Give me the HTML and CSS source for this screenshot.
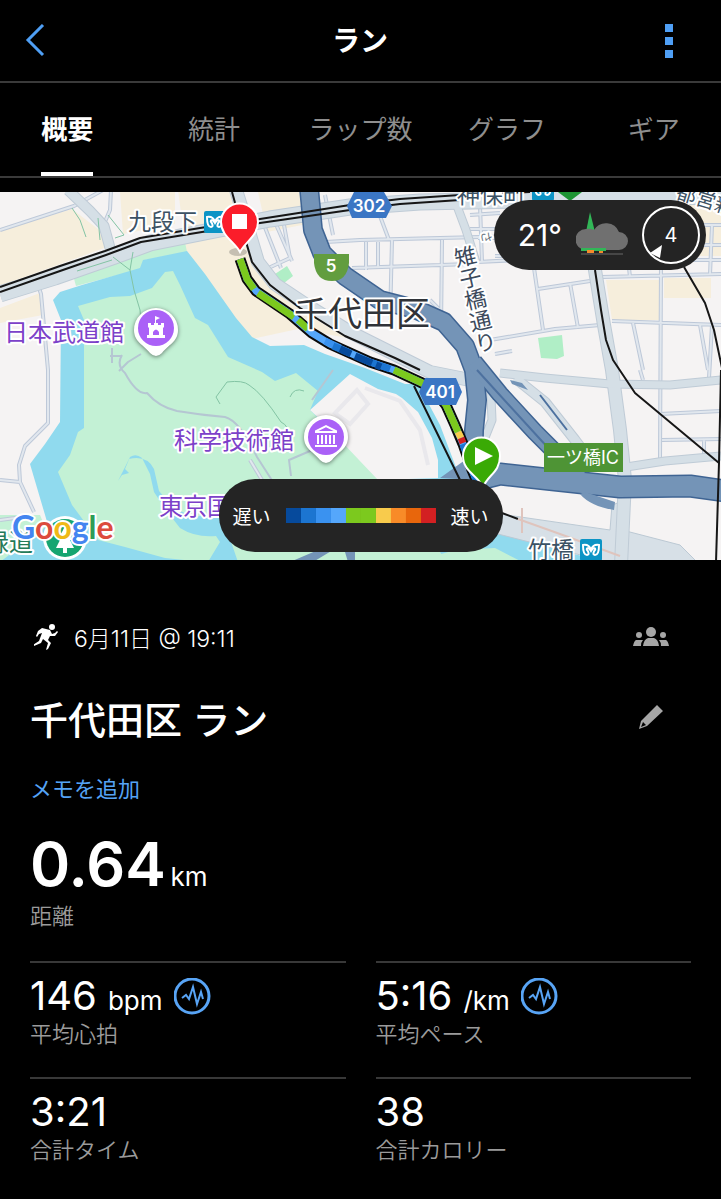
FILE: index.html
```html
<!DOCTYPE html>
<html lang="ja">
<head>
    <meta charset="UTF-8">
    <meta name="viewport" content="width=device-width, initial-scale=1.0">
    <title>ラン</title>
    <link rel="stylesheet" href="styles.css">
</head>
<body>
    <header class="header">
        <button class="icon-button" aria-label="戻る">
            <svg width="20" height="34" viewBox="0 0 20 34"><path d="M18 1 3 16l15 15" fill="none" stroke="#4f9ff5" stroke-width="3"/></svg>
        </button>
        <h1>ラン</h1>
        <button class="icon-button" aria-label="メニュー">
            <svg width="8" height="34" viewBox="0 0 8 34" fill="#4f9ff5"><path d="M0 0h8v8H0zM0 13h8v8H0zM0 26h8v8H0z"/></svg>
        </button>
    </header>

    <nav class="tabs">
        <a class="tab active" href="#summary">概要</a>
        <a class="tab" href="#stats">統計</a>
        <a class="tab" href="#laps">ラップ数</a>
        <a class="tab" href="#graph">グラフ</a>
        <a class="tab" href="#gear">ギア</a>
    </nav>

    <section class="map">
        <svg class="map-canvas" viewBox="0 192 721 368" preserveAspectRatio="xMidYMid slice">
            <defs>
                <g id="main-roads">
                    <path class="w15" d="M0 294 55 277 115 256 150 243 200 233 270 219 350 207 420 202 721 196"/>
                    <path class="w9" d="M68 190 90 211 104 226 110 248"/>
                    <path class="w12" d="M236 190 250 235 258 262 275 284 305 304 350 332 400 357 430 372 470 380"/>
                    <path class="w12" d="M584 190 595 270 604 325 612 370 620 430 625 480 621 565"/>
                    <path class="w7" d="M500 373 545 378 610 384 670 385 721 380"/>
                    <path class="w9" d="M515 378 545 402 575 440 590 460"/>
                    <path class="w7" d="M454 198 466 230 476 262"/>
                    <path class="w7" d="M620 468 665 461 721 456"/>
                    <path class="w7" d="M490 374 492 420 482 445"/>
                </g>
                <g id="streets">
                    <path d="M0 230 74 206 103 190M111 190 110 210 104 224M38 285 41 294 48 370 48 423 25 446 19 465 20 482 34 512M0 480 20 482"/>
                    <path d="M264 225 281 268M275 222 292 261M262 271 290 258 284 225M326 242 360 240 520 236M366 242 366 270M378 242 378 268M392 240 390 320M352 268 470 264M442 240 441 330M380 216 389 240M325 195 333 235M430 300 442 312"/>
                    <path d="M478 262 596 256M480 205 482 262M470 215 500 213M495 256 520 256M470 229 495 229M478 238 495 238"/>
                    <path d="M534 268 543 330M538 289 590 281M570 283 578 328M490 340 555 329 600 325M495 354 512 351"/>
                    <path d="M602 277 721 274M612 321 721 325M661 262 660 460M633 323 643 370M700 325 708 370M680 225 721 225M700 245 721 245M690 260 721 260M712 225 710 275M629 268 630 277"/>
                    <path d="M660 414 721 411M662 440 721 439M704 440 704 459M640 370 643 380M712 325 709 378"/>
                    <path d="M0 520 30 516M250 460 262 480"/>
                </g>
                <g id="highways">
                    <path class="w17" d="M309 188 313 230 322 253 345 276 380 300 415 309 444 322 465 346 474 370 477 400 474 430 473 480"/>
                    <path class="w15" d="M474 362 500 394 535 432 580 477"/>
                    <path class="w20" d="M484 478 500 474 555 480 620 487 690 486 725 491"/>
                </g>
                <path id="route" d="M240 259 247 279 256 291 290 314 312 333 330 344 370 362 394 370 420 382 432 388 446 405 455 425 463 444 472 470 477 482"/>
                <g id="metro">
                    <rect x="204" y="211" width="22" height="22" rx="2" fill="#0c94c5"/>
                    <path d="M207 217c0 6 1 10 4 10s1-4 0-5 1-4 4 1c3-5 5-2 4-1s-3 5 0 5 4-4 4-10q-6-1-8 5-2-6-8-5z" fill="none" stroke="#fff" stroke-width="2"/>
                </g>
            </defs>

            <!-- land, parks and water -->
            <path class="land" d="M0 190h721v372H0z"/>
            <path class="block" d="M0 231 72 209 98 229 107 247 0 286zM178 190h58l22 75 35 38 60 36-55-10-60 13-30-48-22-44zM0 308l40-15 3 22-43 8zM258 192h44l5 32-40 8zM606 280h54v40h-48zM664 278h47v20h-47zM690 196h31v60h-31zM120 192h55v32l-52 10z"/>
            <path class="park" d="M73 275 110 262 150 247 185 242 187 252 145 260 141 269 76 286z"/>
            <path class="garden" d="M272 276l15-10 6 10-14 11zM538 338l24-3 2 21-7 3-16-1z"/>
            <path class="park" d="M0 515h40l20 47H0z"/>
            <path class="water" d="M53 300 60 292 82 285 140 268 143 260 187 251 205 274 236 318 252 337 270 346 304 345 325 354 365 368 405 384 418 384 440 425 460 478 460 562 0 562 48 525 30 464 45 444 60 422 61 320z"/>
            <path class="park" d="M78 306 110 297 130 296 152 288 165 272 173 271 180 285 195 318 208 325 228 357 262 372 275 381 296 373 318 391 310 410 378 478 470 565 232 565 165 558 125 547 98 540 72 505 58 472 70 455 78 432 84 428 84 320z"/>
            <path class="land" d="M350 374 310 410 328 427 340 440 378 480 438 478 438 460 432 438 418 412 402 398 396 394 378 389z"/>
            <path class="building" d="M357 390 335 413 350 424 368 404zM365 388 400 401 420 430 428 465"/>
            <path class="water" d="M118 481l4-8 7-14q18-4 25 10l5 22 12 14q12 8 22 12l27-4 8 20 10 29h-30l12-20-4-6q-20 2-36-8l-14-18-12-18-4-18-8-16q-6-5-12-1l-5 12 4 4-7 2z"/>
            <path class="water" d="M495 530 540 545 620 566H450l-10-14z"/>
            <path class="park" d="M455 550 495 548 530 566H400z"/>
            <path class="wide-road" d="M440 515 500 514 610 530 612 505 626 500 626 531 680 545 700 565 620 565 490 532z"/>

            <use href="#streets" class="street-edge"/>
            <use href="#streets" class="street"/>
            <use href="#main-roads" class="road-edge"/>
            <use href="#main-roads" class="road"/>

            <path class="park-road" d="M141 354 128 362 119 371M122 355q-6 10 3 18 12 22 22 20 12 14 30 18 24 4 48 6 15 4 32 40l18 28M291 476l-2-16 28-12M333 370 312 400M110 356h12M112 348v15"/>
            <path class="path" d="M77 271 112 260M113 257 130 270 133 252M130 270 134 290 140 310 141 322M98 218l2 22M108 215l16 20-9 3M72 208l8 12 6 17M220 404l-4-7 11-15q16-2 22 3 13 8 32 37 8 3 12 22M290 397q4-10 14-6"/>

            <!-- expressways -->
            <use href="#highways" class="highway-edge"/>
            <use href="#highways" class="highway"/>
            <path class="highway-line" d="M477 370 550 450M540 395 567 430"/>
            <path class="highway-spur" d="M585 492 615 502 614 510Q590 506 580 494zM440 478 472 455 474 480zM510 380l12 3 6 7-16-6z"/>
            <path class="highway-spur" d="M290 562l28-12h15l-20 12zM345 552h10v10h-7z"/>

            <!-- railways -->
            <path class="rail" d="M0 287 60 266 105 251 140 238 200 228 260 219 350 205 400 199 460 195 530 192M0 292 60 271 106 255 141 242 202 232 260 223 350 210 400 204 460 200"/>
            <path class="rail" d="M232 192 244 235 252 262 270 285 300 308 345 336 395 358 420 370M414 386 461 482M595 270 601 310 606 340 613 360 621 372 635 393 719 463M684 267 705 303 714 330 722 368M721 370 719 463 716 562M502 513 518 519"/>
            <path class="subway" d="M518 519 560 534 620 556M522 508v25"/>

            <!-- route -->
            <use href="#route" class="route-edge"/>
            <use href="#route" class="route slow-4"/>
            <path class="route mid" d="M240 259 247 279 254 289M258 293 294 317M298 320 308 329M394 370 420 382 432 388 446 405 458 432"/>
            <path class="route slow-3" d="M325 341 340 348"/>
            <path class="route slow-2" d="M333 346 350 353M370 362 390 369"/>
            <path class="route slow-1" d="M340 349 351 354M355 356 372 363M376 365 381 367"/>
            <path class="route fast-1" d="M458 432 461 438"/>
            <path class="route fast-4" d="M461 438 463 443"/>
            <path class="route slow-2" d="M463 444 472 470 477 482"/>

            <!-- road signs -->
            <path d="M354 192h30l8 14-6 12h-34l-5-12z" fill="#3b76c4"/>
            <text class="sign-text" x="369" y="212">302</text>
            <path d="M425 378h31l6 14-6 13h-31l-6-13z" fill="#3b76c4"/>
            <text class="sign-text" x="440" y="398">401</text>
            <path d="M314 254h35v9q-2 18-17 18-16 0-18-18z" fill="#629d3f"/>
            <text class="sign-text" x="331" y="272">5</text>
            <path d="M544 443h79v29h-79z" fill="#4e9435"/>
            <text class="ic-text" x="583" y="464">一ツ橋IC</text>

            <!-- stations -->
            <use href="#metro"/>
            <use href="#metro" x="376" y="328"/>
            <use href="#metro" x="328" y="-32"/>
            <path d="M558 192h24l-12 9z" fill="#1d9434"/>
            <text class="station" x="128" y="230">九段下</text>
            <text class="station" x="457" y="203">神保町</text>
            <text class="station" x="528" y="558">竹橋</text>
            <text class="station small" transform="translate(675 198) rotate(17)">都営新</text>
            <text class="street-name" transform="translate(461 246) rotate(-13)">雉子橋通り</text>
            <text class="minor" transform="translate(481 232) rotate(80)">さ</text>
            <text class="ward" x="294" y="326">千代田区</text>

            <!-- places -->
            <g class="poi-pin">
                <path d="M156 308a22 22 0 0 1 22 22c0 12-10 15-16 23q-6 6-12 0c-6-8-16-11-16-23a22 22 0 0 1 22-22z"/>
                <circle cx="156" cy="328" r="18"/>
            </g>
            <path d="M147 338v-3h2v-7l-1-1v-4h3v2h3v-2h4v2h3v-2h3v4l-1 1v7h2v3zM153 335h6v-3q-3-5-6 0zM155 323v-7l5 2-4 2v3z" fill="#fff" fill-rule="evenodd"/>
            <g class="poi-pin">
                <path d="M326 415a22 22 0 0 1 22 22c0 12-10 15-16 23q-6 6-12 0c-6-8-16-11-16-23a22 22 0 0 1 22-22z"/>
                <circle cx="326" cy="437" r="18"/>
            </g>
            <path d="M316 432v-1l10-5 10 5v1zM318 435v9M322 435v9M326 435v9M330 435v9M334 435v9M315 446h22" fill="none" stroke="#fff" stroke-width="2"/>
            <text class="poi" x="4" y="341">日本武道館</text>
            <text class="poi" x="174" y="449">科学技術館</text>
            <text class="poi" x="159" y="515">東京国</text>
            <circle cx="65" cy="538" r="22" fill="#fff"/>
            <circle cx="65" cy="538" r="19" fill="#16a571"/>
            <path d="M65 526l7 14h-2l4 8h-7v5h-4v-5h-7l4-8h-2z" fill="#fff"/>
            <text class="park-name" x="-15" y="551">緑道</text>
            <text class="google" x="12" y="539"><tspan fill="#4485f0">G</tspan><tspan fill="#dc4b3d">o</tspan><tspan fill="#efb916">o</tspan><tspan fill="#4485f0">g</tspan><tspan fill="#2e9d56">l</tspan><tspan fill="#dc4b3d">e</tspan></text>

            <!-- finish and start -->
            <ellipse cx="238" cy="252" rx="9" ry="4" fill="#333" opacity=".25"/>
            <path d="M240 252c-5-10-19-16-19-30a18 18 0 0 1 37 0c0 14-13 20-18 30z" fill="#fb1d2a" stroke="#fff" stroke-width="2"/>
            <path d="M232 214h15v15h-15z" fill="#fff"/>
            <path d="M483 487c-5-12-20-15-20-31a18 18 0 0 1 37 0c0 16-12 19-17 31z" fill="#3aaa05" stroke="#fff" stroke-width="2"/>
            <path d="M475 447v18l18-9z" fill="#fff"/>
        </svg>

        <div class="weather">
            <span class="temperature">21°</span>
            <svg width="52" height="46" viewBox="0 0 52 46">
                <path d="M14 0l5 20H10z" fill="#32b657"/>
                <path d="M10 38a10 10 0 0 1 0-21q4-1 8 1A14 14 0 0 1 43 20a9 9 0 0 1 0 18z" fill="#707070"/>
                <path d="M5 36h25v3H5z" fill="#32b657"/>
                <path d="M11 38h7v3h-7zM23 39h4v2h-4z" fill="#f58b2a"/>
                <path d="M5 42h42" stroke="#686868" stroke-width="1"/>
            </svg>
            <div class="wind">
                <svg width="58" height="58" viewBox="0 0 58 58">
                    <circle cx="29" cy="29" r="28" fill="none" stroke="#fff" stroke-width="2"/>
                    <path d="M8 47l12-8-2 13-4-2z" fill="#fff"/>
                </svg>
                <span>4</span>
            </div>
        </div>

        <div class="legend">
            <span>遅い</span>
            <div class="legend-bar">
                <i class="slow-1"></i><i class="slow-2"></i><i class="slow-3"></i><i class="slow-4"></i><i class="mid"></i><i class="mid"></i><i class="fast-1"></i><i class="fast-2"></i><i class="fast-3"></i><i class="fast-4"></i>
            </div>
            <span>速い</span>
        </div>
    </section>

    <main class="summary" id="summary">
        <div class="row">
            <svg width="26" height="26" viewBox="0 0 26 26" fill="#fff">
                <circle cx="18" cy="3" r="3"/>
                <path d="M8 4l8 2 2 4 3-1 2-2 1 1-3 4h-5l-2 4 3 3-3 6-2 1 2-7-5-4-2 4-7 3-1-1 6-4 3-8-3 1-2 3-1-1 2-5z"/>
            </svg>
            <span class="date">6月11日 @ 19:11</span>
            <button class="icon-button privacy" aria-label="公開設定">
                <svg width="36" height="20" viewBox="0 0 36 20" fill="#a6a6a6">
                    <circle cx="18" cy="5" r="5"/>
                    <path d="M10 19q1-7 5-8h6q4 1 5 8z"/>
                    <circle cx="6" cy="8" r="3"/><circle cx="30" cy="8" r="3"/>
                    <path d="M0 19q1-5 3-6h7q-2 2-2 6zM36 19q-1-5-3-6h-7q2 2 2 6z"/>
                </svg>
            </button>
        </div>
        <div class="row title-row">
            <h2>千代田区 ラン</h2>
            <button class="icon-button edit" aria-label="編集">
                <svg width="26" height="26" viewBox="0 0 26 26"><path d="M19 1l6 6L9 22l-8 3 2-8zM5 18l-2 5 5-2z" fill="#a6a6a6" fill-rule="evenodd"/></svg>
            </button>
        </div>
        <a class="memo" href="#memo">メモを追加</a>

        <div class="distance">
            <div><span class="number">0.64</span> <span class="unit">km</span></div>
            <div class="label">距離</div>
        </div>

        <div class="stats">
            <div class="stat">
                <div class="value">146 <span class="unit">bpm</span>
                    <button class="chart-button" aria-label="心拍グラフ"><svg width="37" height="37" viewBox="0 0 37 37"><circle cx="18" cy="18" r="17"/><path d="M8 20l4-3 3 4 4-12 4 17 4-12 2 7"/></svg></button>
                </div>
                <div class="label">平均心拍</div>
            </div>
            <div class="stat">
                <div class="value">5:16 <span class="unit">/km</span>
                    <button class="chart-button" aria-label="ペースグラフ"><svg width="37" height="37" viewBox="0 0 37 37"><circle cx="18" cy="18" r="17"/><path d="M8 20l4-3 3 4 4-12 4 17 4-12 2 7"/></svg></button>
                </div>
                <div class="label">平均ペース</div>
            </div>
            <div class="stat">
                <div class="value">3:21</div>
                <div class="label">合計タイム</div>
            </div>
            <div class="stat">
                <div class="value">38</div>
                <div class="label">合計カロリー</div>
            </div>
        </div>
    </main>
</body>
</html>
```
FILE: styles.css
```css
* {
    margin: 0;
    padding: 0;
    box-sizing: border-box;
}

body {
    font-family: Inter, "Noto Sans CJK JP", sans-serif;
    background-color: #000;
    color: #fff;
    overflow-x: hidden;
}

svg {
    display: block;
}

button {
    background: none;
    border: none;
    cursor: pointer;
}

a {
    text-decoration: none;
}

.header {
    display: flex;
    align-items: center;
    justify-content: space-between;
    height: 83px;
    border-bottom: 2px solid #3a3a3a;
    padding: 0 48px 0 25px;
}

.header h1 {
    font-size: 28px;
    font-weight: 700;
    line-height: 40px;
    padding-left: 10px;
}

.tabs {
    display: grid;
    grid-template-columns: repeat(5, 1fr);
    justify-items: center;
    margin: 0 -6px;
    padding-top: 16px;
    border-bottom: 2px solid #3a3a3a;
}

.tab {
    height: 77px;
    color: #8e8e8e;
    font-size: 26px;
    line-height: 62px;
    white-space: nowrap;
}

.tab.active {
    color: #fff;
    font-weight: 700;
    border-bottom: 4px solid #fff;
}

/* map */

.map {
    position: relative;
    margin-top: 14px;
}

.map-canvas {
    width: 100%;
    aspect-ratio: 721 / 368;
}

.land {
    fill: #f5f3f3;
}

.block {
    fill: #f6eedc;
}

.park {
    fill: #c3f1d5;
}

.garden {
    fill: #b0eec6;
}

.water {
    fill: #90daee;
}

.building {
    fill: none;
    stroke: #e9e8ec;
    stroke-width: 4;
}

.wide-road {
    fill: #d7e0e7;
    stroke: #bcc9d4;
}

.street-edge,
.street,
.road-edge,
.road,
.highway-edge,
.highway,
.park-road,
.path,
.rail,
.subway,
.route,
.route-edge {
    fill: none;
    stroke-linejoin: round;
}

/* edges are the same lines, drawn wider underneath */
.w7 { stroke-width: calc(7px + var(--edge, 0px)); }
.w9 { stroke-width: calc(9px + var(--edge, 0px)); }
.w12 { stroke-width: calc(12px + var(--edge, 0px)); }
.w15 { stroke-width: calc(15px + var(--edge, 0px)); }
.w17 { stroke-width: calc(17px + var(--edge, 0px)); }
.w20 { stroke-width: calc(20px + var(--edge, 0px)); }

.street-edge {
    stroke: #bdc8d8;
    stroke-width: 4;
}

.street {
    stroke: #e1e7ee;
    stroke-width: 2;
}

.road-edge {
    --edge: 2px;
    stroke: #bfcbd6;
}

.road {
    stroke: #d5dfe6;
}

.park-road {
    stroke: #b5c6d2;
    stroke-width: 2;
}

.path {
    stroke: #83c4a4;
    stroke-width: 1;
}

.highway-edge {
    --edge: 3px;
    stroke: #3f6493;
}

.highway {
    stroke: #7494b7;
}

.highway-line {
    fill: none;
    stroke: #4d719f;
    stroke-width: 2;
}

.highway-spur {
    fill: #7494b7;
}

.rail {
    stroke: #161616;
    stroke-width: 2;
}

.subway {
    stroke: #dfc4bd;
    stroke-width: 2;
}

.route-edge {
    stroke: #0b0b0b;
    stroke-width: 11;
}

.route {
    stroke-width: 7;
}

.route.slow-1 { stroke: #064a9c; }
.route.slow-2 { stroke: #1c75d1; }
.route.slow-3 { stroke: #3a92f0; }
.route.slow-4 { stroke: #55a7fb; }
.route.mid { stroke: #7cc91e; }
.route.fast-1 { stroke: #f8cb4c; }
.route.fast-4 { stroke: #d32022; }

.sign-text {
    fill: #fff;
    font-size: 17px;
    font-weight: 600;
    text-anchor: middle;
}

.ic-text {
    fill: #fff;
    font-size: 18px;
    text-anchor: middle;
}

.station,
.street-name,
.ward,
.poi,
.park-name,
.google,
.minor {
    paint-order: stroke;
    stroke: #fff;
    stroke-width: 4px;
    stroke-linejoin: round;
}

.station {
    fill: #3c5264;
    font-size: 23px;
}

.station.small {
    font-size: 20px;
}

.street-name {
    fill: #3c4a5c;
    font-size: 22px;
    writing-mode: vertical-rl;
}

.minor {
    fill: #66717c;
    font-size: 12px;
}

.ward {
    fill: #303338;
    font-size: 34px;
}

.poi {
    fill: #7c41c9;
    font-size: 24px;
}

.park-name {
    fill: #247b59;
    font-size: 24px;
}

.google {
    font-family: Lato, sans-serif;
    font-size: 32px;
    font-weight: 700;
}

.poi-pin path {
    fill: #fff;
    filter: drop-shadow(0 1px 2px rgba(0, 0, 0, 0.5));
}

.poi-pin circle {
    fill: #aa61f7;
}

.weather,
.legend {
    position: absolute;
    display: flex;
    align-items: center;
    background-color: #242424;
}

.weather {
    top: 8px;
    right: 15px;
    height: 70px;
    padding: 0 6px 0 24px;
    gap: 14px;
    border-radius: 35px;
}

.temperature {
    font-size: 30px;
}

.wind {
    display: grid;
    place-items: center;
    font-size: 20px;
}

.wind > * {
    grid-area: 1 / 1;
}

.legend {
    bottom: 8px;
    left: 50%;
    height: 73px;
    padding: 0 14px;
    gap: 15px;
    border-radius: 36px;
    font-size: 19px;
    transform: translateX(-50%);
}

.legend-bar {
    display: flex;
}

.legend-bar i {
    width: 15px;
    height: 15px;
}

.legend-bar .slow-1 { background-color: #064a9c; }
.legend-bar .slow-2 { background-color: #1c75d1; }
.legend-bar .slow-3 { background-color: #3a92f0; }
.legend-bar .slow-4 { background-color: #55a7fb; }
.legend-bar .mid { background-color: #7cc91e; }
.legend-bar .fast-1 { background-color: #f8cb4c; }
.legend-bar .fast-2 { background-color: #f88b28; }
.legend-bar .fast-3 { background-color: #e8660c; }
.legend-bar .fast-4 { background-color: #d32022; }

/* summary */

.summary {
    padding: 59px 30px 32px;
}

.row {
    display: flex;
    align-items: center;
    height: 36px;
    padding-left: 4px;
}

.date {
    margin-left: 14px;
    font-size: 23px;
    font-weight: 300;
}

.privacy {
    margin: 0 22px 0 auto;
}

.title-row {
    height: 56px;
    margin-top: 34px;
    padding-left: 0;
}

.title-row h2 {
    font-size: 38px;
    font-weight: 500;
}

.edit {
    margin: 0 27px 0 auto;
}

.memo {
    display: block;
    margin-top: 27px;
    color: #55a3f5;
    font-size: 22px;
    line-height: 34px;
}

.distance {
    margin-top: 22px;
}

.number {
    font-size: 61px;
    font-weight: 600;
    line-height: 72px;
}

.unit {
    font-size: 26px;
}

.label {
    color: #9b9b9b;
    font-size: 22px;
    font-weight: 350;
    line-height: 32px;
}

.stats {
    display: grid;
    grid-template-columns: 1fr 1fr;
    column-gap: 30px;
    margin-top: 29px;
}

.stat {
    height: 116px;
    padding-top: 11px;
    border-top: 2px solid #383838;
}

.value {
    display: flex;
    align-items: baseline;
    gap: 11px;
    height: 44px;
    font-size: 40px;
    line-height: 44px;
}

.chart-button {
    align-self: center;
}

.chart-button svg {
    fill: none;
    stroke: #58a4f5;
    stroke-width: 3;
}

.chart-button path {
    stroke-width: 2;
}
```
